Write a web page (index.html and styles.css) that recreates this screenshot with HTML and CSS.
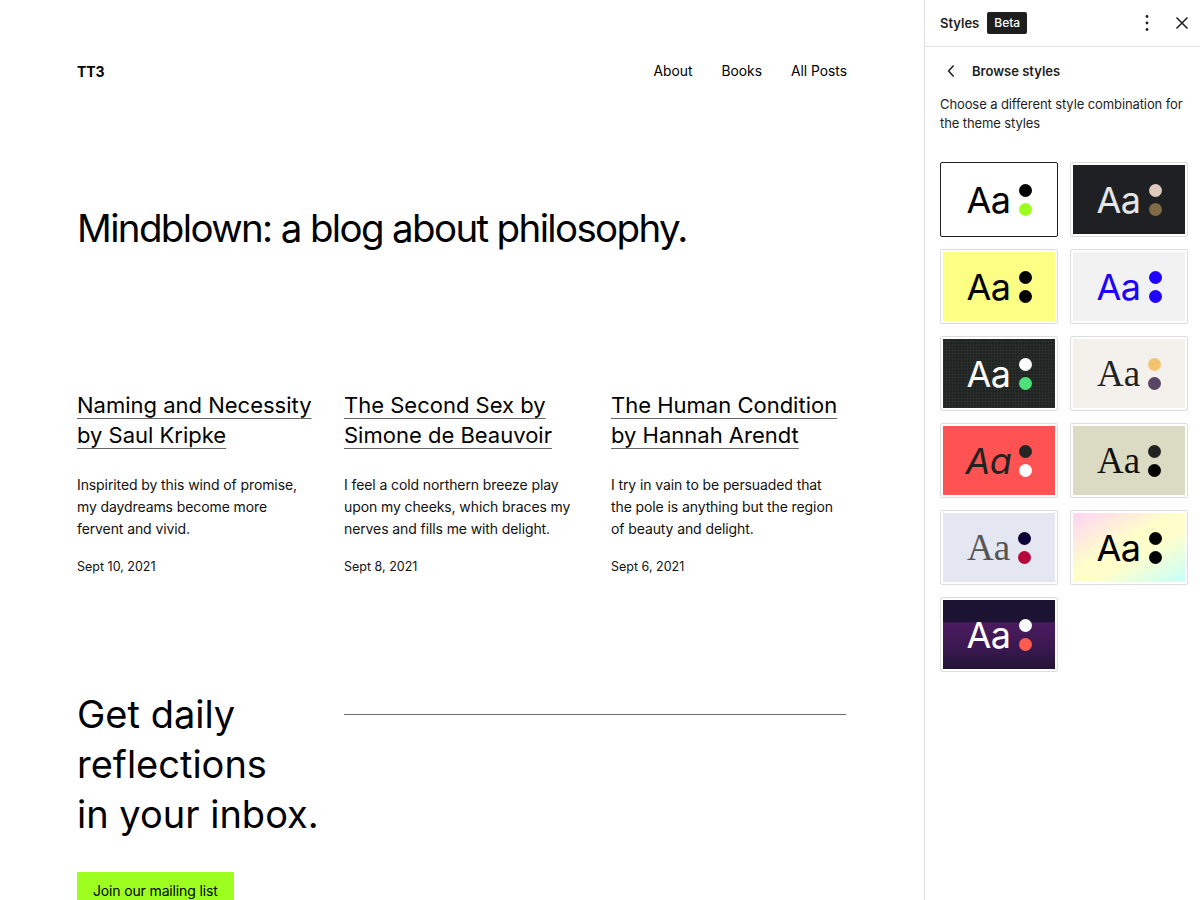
FILE: index.html
```html
<!DOCTYPE html>
<html lang="en">
<head>
<meta charset="utf-8">
<title>Styles – TT3</title>
<link rel="stylesheet" href="styles.css">
</head>
<body>
<main class="site">
  <header class="site-header">
    <div class="site-title">TT3</div>
    <nav class="site-nav">
      <a href="#">About</a>
      <a href="#">Books</a>
      <a href="#">All Posts</a>
    </nav>
  </header>

  <h1 class="site-heading">Mindblown: a blog about philosophy.</h1>

  <section class="posts">
    <article class="post">
      <h2 class="post-title"><a href="#">Naming and Necessity by Saul Kripke</a></h2>
      <p class="post-excerpt">Inspirited by this wind of promise, my daydreams become more fervent and vivid.</p>
      <div class="post-date">Sept 10, 2021</div>
    </article>
    <article class="post">
      <h2 class="post-title"><a href="#">The Second Sex by Simone de Beauvoir</a></h2>
      <p class="post-excerpt">I feel a cold northern breeze play upon my cheeks, which braces my nerves and fills me with delight.</p>
      <div class="post-date">Sept 8, 2021</div>
    </article>
    <article class="post">
      <h2 class="post-title"><a href="#">The Human Condition by Hannah Arendt</a></h2>
      <p class="post-excerpt">I try in vain to be persuaded that the pole is anything but the region of beauty and delight.</p>
      <div class="post-date">Sept 6, 2021</div>
    </article>
  </section>

  <section class="subscribe">
    <div class="subscribe-left">
      <h2 class="subscribe-heading">Get daily<br>reflections<br>in your inbox.</h2>
      <a class="subscribe-button" href="#">Join our mailing list</a>
    </div>
    <div class="subscribe-right">
      <hr class="separator">
    </div>
  </section>
</main>

<aside class="panel">
  <div class="panel-header">
    <div class="panel-title">Styles</div>
    <span class="badge">Beta</span>
    <div class="panel-actions">
      <button class="icon-btn" aria-label="Options">
        <svg width="24" height="24" viewBox="0 0 24 24"><circle cx="12" cy="5.5" r="1.4" fill="#1e1e1e"/><circle cx="12" cy="12" r="1.4" fill="#1e1e1e"/><circle cx="12" cy="18.5" r="1.4" fill="#1e1e1e"/></svg>
      </button>
      <button class="icon-btn" aria-label="Close">
        <svg width="24" height="24" viewBox="0 0 24 24"><path d="M6.5 6.5 L17.5 17.5 M17.5 6.5 L6.5 17.5" stroke="#1e1e1e" stroke-width="1.5" fill="none"/></svg>
      </button>
    </div>
  </div>

  <div class="panel-body">
    <div class="back-row">
      <button class="back-btn" aria-label="Back">
        <svg width="24" height="24" viewBox="0 0 24 24"><path d="M14.6 6.5 L9.6 12 L14.6 17.5" stroke="#1e1e1e" stroke-width="1.5" fill="none"/></svg>
      </button>
      <div class="back-title">Browse styles</div>
    </div>
    <p class="panel-desc">Choose a different style combination for the theme styles</p>

    <div class="variations">
      <div class="variation selected">
        <div class="preview v-default"><span class="aa">Aa</span><span class="dots"><i></i><i></i></span></div>
      </div>
      <div class="variation">
        <div class="preview v-aubergine"><span class="aa">Aa</span><span class="dots"><i></i><i></i></span></div>
      </div>
      <div class="variation">
        <div class="preview v-canary"><span class="aa">Aa</span><span class="dots"><i></i><i></i></span></div>
      </div>
      <div class="variation">
        <div class="preview v-electric"><span class="aa">Aa</span><span class="dots"><i></i><i></i></span></div>
      </div>
      <div class="variation">
        <div class="preview v-grapes"><span class="aa">Aa</span><span class="dots"><i></i><i></i></span></div>
      </div>
      <div class="variation">
        <div class="preview v-marigold"><span class="aa serif">Aa</span><span class="dots"><i></i><i></i></span></div>
      </div>
      <div class="variation">
        <div class="preview v-pilgrimage"><span class="aa italic">Aa</span><span class="dots"><i></i><i></i></span></div>
      </div>
      <div class="variation">
        <div class="preview v-pitch"><span class="aa serif">Aa</span><span class="dots"><i></i><i></i></span></div>
      </div>
      <div class="variation">
        <div class="preview v-sherbet"><span class="aa serif">Aa</span><span class="dots"><i></i><i></i></span></div>
      </div>
      <div class="variation">
        <div class="preview v-whisper"><span class="aa">Aa</span><span class="dots"><i></i><i></i></span></div>
      </div>
      <div class="variation">
        <div class="preview v-dusk"><span class="aa">Aa</span><span class="dots"><i></i><i></i></span></div>
      </div>
    </div>
  </div>
</aside>
</body>
</html>
```

FILE: styles.css
```css
* { box-sizing: border-box; }

html, body {
  margin: 0;
  height: 900px;
  overflow: hidden;
}

body {
  display: flex;
  font-family: Inter, "Noto Sans", "Liberation Sans", sans-serif;
  color: #000;
  background: #fff;
}

/* ---------- site canvas ---------- */
.site {
  flex: 0 0 924px;
  padding: 60px 77px 0 77px;
  overflow: hidden;
}

.site-header {
  display: flex;
  justify-content: space-between;
  align-items: center;
  height: 22px;
}

.site-title {
  font-size: 14px;
  font-weight: 700;
  letter-spacing: -0.1px;
}

.site-nav {
  display: flex;
  gap: 29px;
}

.site-nav a {
  font-size: 13.8px;
  color: #000;
  text-decoration: none;
}

.site-heading {
  margin: 122px 0 0 0;
  font-size: 38.5px;
  line-height: 48px;
  font-weight: 400;
  letter-spacing: -1.65px;
}

.posts {
  display: grid;
  grid-template-columns: repeat(3, 235px);
  column-gap: 32px;
  margin-top: 138px;
}

.post-title {
  margin: 0;
  font-size: 22px;
  line-height: 30px;
  font-weight: 400;
}

.post-title a {
  color: #000;
  text-decoration: underline;
  text-decoration-thickness: 1px;
  text-underline-offset: 5px;
  text-decoration-color: rgba(0, 0, 0, 0.6);
}

.post-excerpt {
  margin: 24px 0 0 0;
  font-size: 14px;
  line-height: 22px;
  letter-spacing: -0.1px;
  color: #111;
}

.post-date {
  margin-top: 17px;
  font-size: 12.5px;
  line-height: 20px;
  color: #111;
}

.subscribe {
  display: grid;
  grid-template-columns: 235px 1fr;
  column-gap: 32px;
  margin-top: 112px;
}

.subscribe-heading {
  margin: 0;
  font-size: 38px;
  line-height: 50px;
  font-weight: 400;
  white-space: nowrap;
}

.subscribe-button {
  display: inline-block;
  margin-top: 33px;
  padding: 10px 16px;
  background: #9dff20;
  color: #000;
  font-size: 14px;
  line-height: 17px;
  letter-spacing: -0.15px;
  text-decoration: none;
}

.separator {
  margin: 25px 0 0 0;
  border: 0;
  height: 1px;
  background: #6b6b6b;
  width: 502px;
}

/* ---------- styles panel ---------- */
.panel {
  flex: 0 0 276px;
  border-left: 1px solid #e0e0e0;
  font-size: 13px;
  color: #1e1e1e;
  background: #fff;
}

.panel-header {
  display: flex;
  align-items: center;
  height: 47px;
  padding: 0 10px 0 15px;
  border-bottom: 1px solid #e0e0e0;
}

.panel-title {
  font-weight: 600;
  font-size: 13px;
}

.badge {
  margin-left: 8px;
  background: #1e1e1e;
  color: #fff;
  font-size: 12px;
  font-weight: 500;
  line-height: 22px;
  height: 22px;
  padding: 0 7px;
  border-radius: 2px;
}

.panel-actions {
  margin-left: auto;
  display: flex;
  gap: 11px;
}

.icon-btn, .back-btn {
  display: flex;
  align-items: center;
  justify-content: center;
  width: 24px;
  height: 24px;
  padding: 0;
  border: 0;
  background: none;
}

.panel-body {
  padding: 12px 16px 0 15px;
}

.back-row {
  display: flex;
  align-items: center;
  gap: 9px;
  height: 24px;
}

.back-btn {
  margin-left: -1px;
}

.back-title {
  font-weight: 600;
  font-size: 13px;
}

.panel-desc {
  margin: 12px 0 0 0;
  line-height: 19px;
  font-size: 13px;
  letter-spacing: -0.1px;
}

.variations {
  display: grid;
  grid-template-columns: 118px 118px;
  grid-auto-rows: 75px;
  gap: 12px;
  margin-top: 29px;
}

.variation {
  border: 1px solid #dddddd;
  border-radius: 2px;
  padding: 2px;
}

.variation.selected {
  border-color: #1e1e1e;
}

.preview {
  height: 100%;
  display: flex;
  align-items: center;
  justify-content: center;
  gap: 8px;
}

.aa {
  font-family: Inter, "Noto Sans", sans-serif;
  font-size: 36px;
  line-height: 1;
  letter-spacing: -0.5px;
}

.aa.serif {
  font-family: "Liberation Serif", "DejaVu Serif", serif;
  font-size: 37px;
  letter-spacing: 0;
}

.aa.italic {
  font-style: italic;
}

.dots {
  display: flex;
  flex-direction: column;
  gap: 6px;
}

.dots i {
  display: block;
  width: 13px;
  height: 13px;
  border-radius: 50%;
}

/* variation palettes */
.v-default { background: #fff; color: #000; }
.v-default .dots i:nth-child(1) { background: #000; }
.v-default .dots i:nth-child(2) { background: #9dff20; }

.v-aubergine { background: #1f2024; color: #e6e6e6; }
.v-aubergine .dots i:nth-child(1) { background: #dccabd; }
.v-aubergine .dots i:nth-child(2) { background: #7f6b44; }

.v-canary { background: #fdff85; color: #000; }
.v-canary .dots i { background: #000; }

.v-electric { background: #f2f2f2; color: #2000ff; }
.v-electric .dots i { background: #2000ff; }

.v-grapes {
  background-color: #1f2422;
  background-image:
    repeating-linear-gradient(0deg, rgba(255,255,255,0.035) 0 1px, transparent 1px 3px),
    repeating-linear-gradient(90deg, rgba(255,255,255,0.035) 0 1px, transparent 1px 3px);
  color: #fff;
}
.v-grapes .dots i:nth-child(1) { background: #fff; }
.v-grapes .dots i:nth-child(2) { background: #4de17a; }

.v-marigold { background: #f4f0eb; color: #222; }
.v-marigold .dots i:nth-child(1) { background: #f2c46f; }
.v-marigold .dots i:nth-child(2) { background: #594664; }

.v-pilgrimage { background: #ff5252; color: #222; }
.v-pilgrimage .dots i:nth-child(1) { background: #252525; }
.v-pilgrimage .dots i:nth-child(2) { background: #fff; }

.v-pitch { background: #dbdac2; color: #111; }
.v-pitch .dots i:nth-child(1) { background: #222; }
.v-pitch .dots i:nth-child(2) { background: #000; }

.v-sherbet { background: #e4e6f1; color: #555; }
.v-sherbet .dots i:nth-child(1) { background: #0c0037; }
.v-sherbet .dots i:nth-child(2) { background: #b6073c; }

.v-whisper {
  background: linear-gradient(150deg, #ffd4f6 0%, #ffffc9 45%, #fffecb 60%, #c8fffa 100%);
  color: #000;
}
.v-whisper .dots i { background: #000; }

.v-dusk {
  background:
    linear-gradient(180deg, #1c1333 0%, #1c1333 32%, #4b1b5f 33%, #3a1850 70%, #221436 100%);
  color: #fff;
}
.v-dusk .dots i:nth-child(1) { background: #fff; }
.v-dusk .dots i:nth-child(2) { background: #ff5b4f; }
```
